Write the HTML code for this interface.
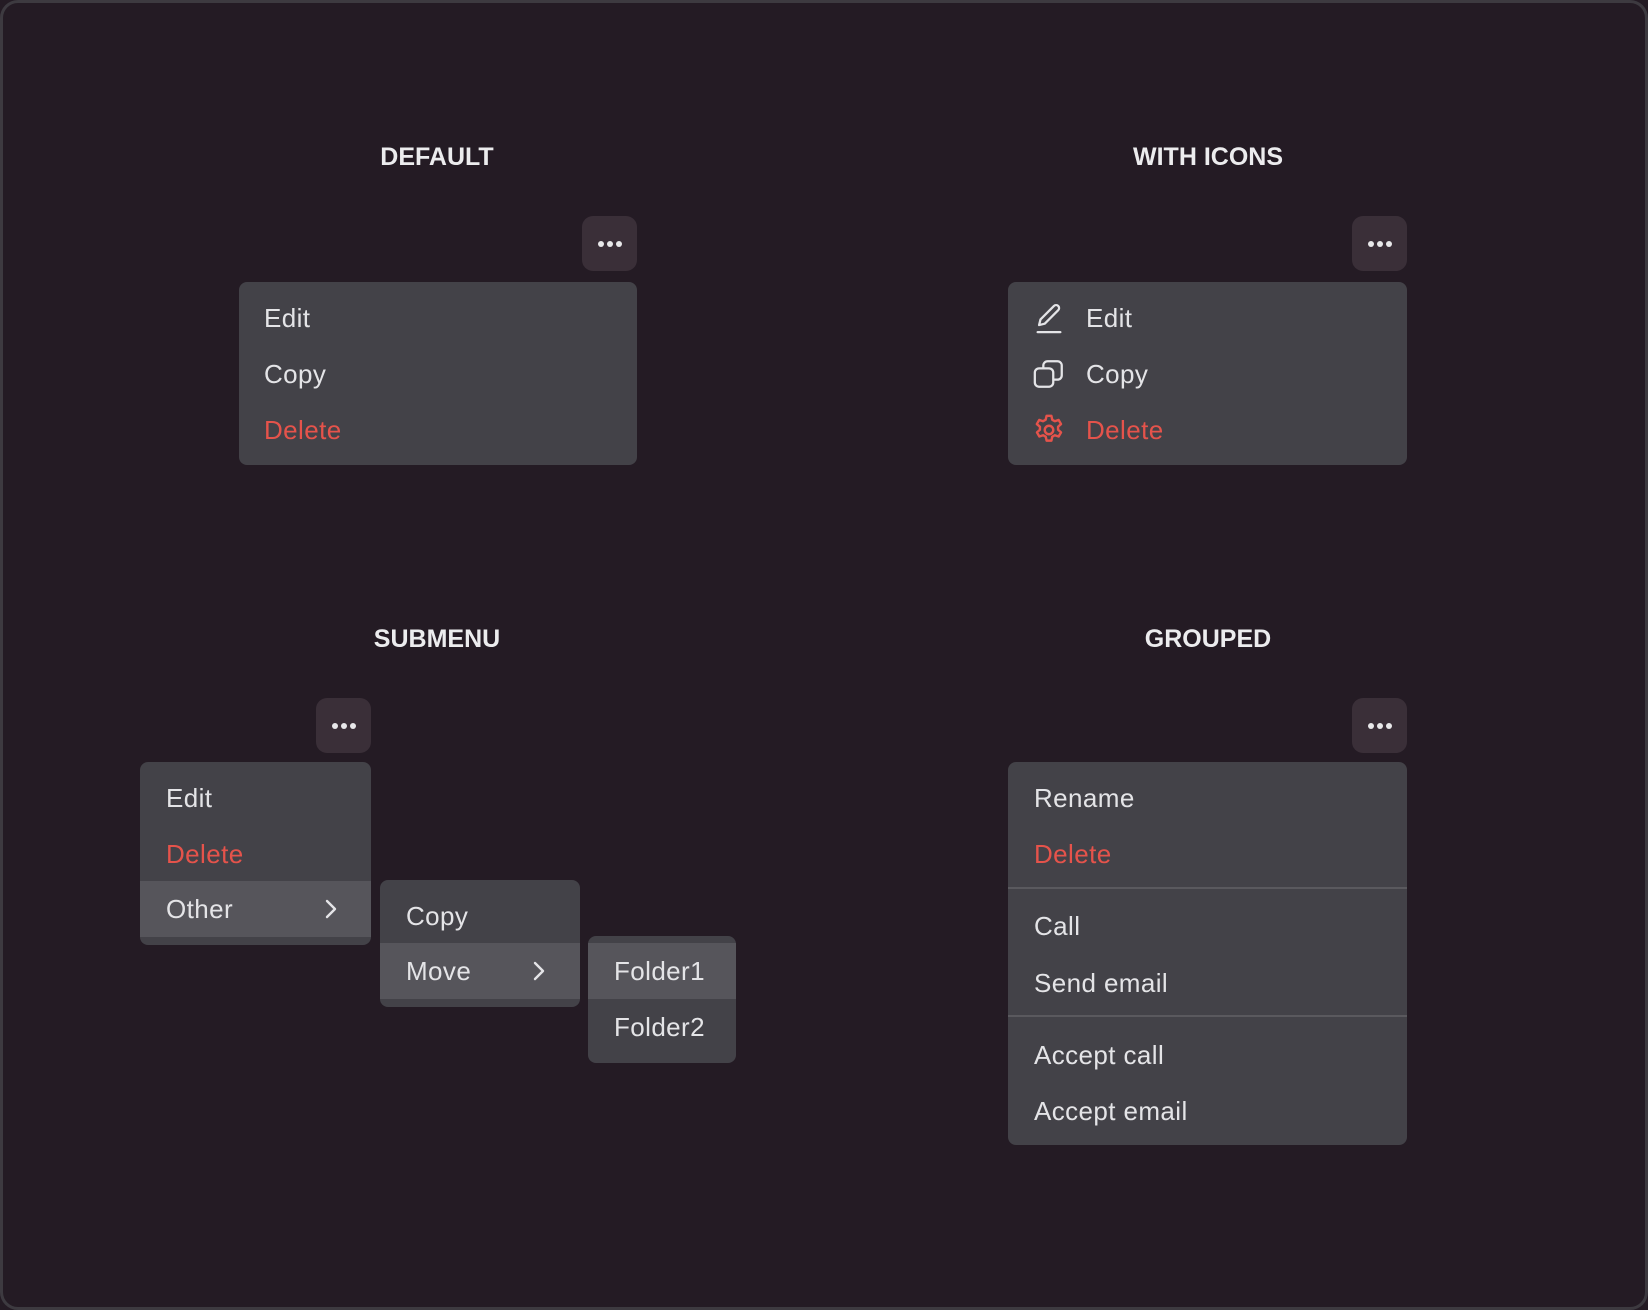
<!DOCTYPE html>
<html><head><meta charset="utf-8"><style>
*{margin:0;padding:0;box-sizing:border-box}
html,body{width:1648px;height:1310px;background:#241b24;overflow:hidden}
body{font-family:"Liberation Sans",sans-serif;color:#e4e4e7;position:relative}
.frame{position:absolute;left:0;top:0;width:1648px;height:1310px;border:3px solid #3d3a40;border-radius:18px;background:#241b24}
.t{position:absolute;font-size:25px;font-weight:bold;color:#ececee;transform:translateX(-50%);white-space:nowrap}
.btn{position:absolute;width:55px;height:55px;border-radius:11px;background:#3a2f38}
.btn i{position:absolute;top:25px;width:6px;height:6px;border-radius:50%;background:#e8e8ea}
.m{position:absolute;background:#434248;border-radius:8px;overflow:hidden}
.r{position:absolute;left:0;right:0;height:56px;line-height:56px;font-size:26px;letter-spacing:0.4px;white-space:nowrap}
.red{color:#e5534b}
.hl{background:#56555b}
.dv{position:absolute;left:0;right:0;height:2px;background:#5a595e}
.ch{position:absolute;top:18px}
</style></head><body>
<div class="frame"></div>
<div class="t" style="left:437px;top:143px">DEFAULT</div>
<div class="t" style="left:1208px;top:143px">WITH ICONS</div>
<div class="t" style="left:437px;top:625px">SUBMENU</div>
<div class="t" style="left:1208px;top:625px">GROUPED</div>

<div class="btn" style="left:582px;top:216px"><i style="left:16px"></i><i style="left:25px"></i><i style="left:34px"></i></div>
<div class="m" style="left:239px;top:282px;width:398px;height:183px">
<div class="r" style="top:8px;padding-left:25px">Edit</div>
<div class="r" style="top:64px;padding-left:25px">Copy</div>
<div class="r red" style="top:120px;padding-left:25px">Delete</div>
</div>

<div class="btn" style="left:1352px;top:216px"><i style="left:16px"></i><i style="left:25px"></i><i style="left:34px"></i></div>
<div class="m" style="left:1008px;top:282px;width:399px;height:183px">
<div class="r" style="top:8px;padding-left:78px">Edit</div>
<div class="r" style="top:64px;padding-left:78px">Copy</div>
<div class="r red" style="top:120px;padding-left:78px">Delete</div>
<svg style="position:absolute;left:24px;top:19px" width="34" height="34" viewBox="0 0 24 24" fill="none" stroke="#e4e4e7" stroke-width="1.6" stroke-linecap="round" stroke-linejoin="round"><path d="M4 22h16"/><path d="M15.5 3.5a2 2 0 0 1 3 3L9 16l-4 1 1-4z"/></svg>
<svg style="position:absolute;left:24px;top:75px" width="34" height="34" viewBox="0 0 24 24" fill="none" stroke="#e4e4e7" stroke-width="1.6" stroke-linejoin="round"><rect x="2" y="8" width="13" height="13" rx="3"/><path d="M8 8V6a3 3 0 0 1 3-3h7a3 3 0 0 1 3 3v7a3 3 0 0 1-3 3h-3"/></svg>
<svg style="position:absolute;left:24px;top:131px" width="34" height="34" viewBox="0 0 24 24" fill="none" stroke="#e5534b" stroke-width="1.7" stroke-linejoin="round"><circle cx="12" cy="12" r="3"/><path d="M10.3 2h3.4l.6 2.8 1.8 1 2.7-.9 1.7 2.9-2.1 1.9v2.1l2.1 1.9-1.7 2.9-2.7-.9-1.8 1-.6 2.8h-3.4l-.6-2.8-1.8-1-2.7.9-1.7-2.9 2.1-1.9v-2.1L3.4 7.8l1.7-2.9 2.7.9 1.8-1z"/></svg>
</div>

<div class="btn" style="left:316px;top:698px"><i style="left:16px"></i><i style="left:25px"></i><i style="left:34px"></i></div>
<div class="m" style="left:140px;top:762px;width:231px;height:183px">
<div class="r" style="top:8px;padding-left:26px">Edit</div>
<div class="r red" style="top:64px;padding-left:26px">Delete</div>
<div class="r hl" style="top:119px;padding-left:26px">Other<svg class="ch" style="left:184px" width="14" height="20" viewBox="0 0 14 20" fill="none" stroke="#e4e4e7" stroke-width="2.4" stroke-linecap="round" stroke-linejoin="round"><path d="M3 2l8 8-8 8"/></svg></div>
</div>
<div class="m" style="left:380px;top:880px;width:200px;height:127px">
<div class="r" style="top:8px;padding-left:26px">Copy</div>
<div class="r hl" style="top:63px;padding-left:26px">Move<svg class="ch" style="left:152px" width="14" height="20" viewBox="0 0 14 20" fill="none" stroke="#e4e4e7" stroke-width="2.4" stroke-linecap="round" stroke-linejoin="round"><path d="M3 2l8 8-8 8"/></svg></div>
</div>
<div class="m" style="left:588px;top:936px;width:148px;height:127px">
<div class="r hl" style="top:7px;padding-left:26px">Folder1</div>
<div class="r" style="top:63px;padding-left:26px">Folder2</div>
</div>

<div class="btn" style="left:1352px;top:698px"><i style="left:16px"></i><i style="left:25px"></i><i style="left:34px"></i></div>
<div class="m" style="left:1008px;top:762px;width:399px;height:383px">
<div class="r" style="top:8px;padding-left:26px">Rename</div>
<div class="r red" style="top:64px;padding-left:26px">Delete</div>
<div class="dv" style="top:125px"></div>
<div class="r" style="top:136px;padding-left:26px">Call</div>
<div class="r" style="top:193px;padding-left:26px">Send email</div>
<div class="dv" style="top:253px"></div>
<div class="r" style="top:265px;padding-left:26px">Accept call</div>
<div class="r" style="top:321px;padding-left:26px">Accept email</div>
</div>
</body></html>
